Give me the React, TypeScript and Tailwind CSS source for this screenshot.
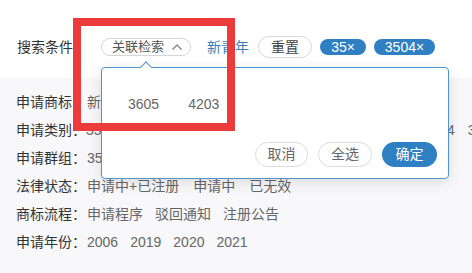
import React from 'react';

const font = { fontFamily: '"Liberation Sans", "Noto Sans CJK SC", sans-serif' };

const rows: { label: string; items: string[]; gap: string }[] = [
  { label: '申请商标：', items: ['新青年'], gap: 'gap-[12px]' },
  {
    label: '申请类别：',
    items: ['35', '3501', '3502', '3503', '3505', '3506', '3507', '3508', '3514', '3520'],
    gap: 'gap-[13px]'
  },
  { label: '申请群组：', items: ['3501', '3502', '3503'], gap: 'gap-[12px]' },
  { label: '法律状态：', items: ['申请中+已注册', '申请中', '已无效'], gap: 'gap-[14px]' },
  { label: '商标流程：', items: ['申请程序', '驳回通知', '注册公告'], gap: 'gap-[12px]' },
  { label: '申请年份：', items: ['2006', '2019', '2020', '2021'], gap: 'gap-[12px]' }
];

export default function App() {
  return (
    <div className="relative w-[472px] h-[273px] overflow-hidden bg-[#f8f8fa]" style={font}>
      {/* search bar */}
      <div className="h-[78px] bg-white pt-[36px] pl-[17px]">
        <div className="flex items-center h-[22px] text-[14px]">
          <span className="w-[84px] text-[#333]">搜索条件</span>
          <div className="relative z-10">
            <div className="flex items-center h-[18px] w-[90px] pl-[10px] border border-[#d6d6d6] rounded-full text-[13px] text-[#555]">
              <span>关联检索</span>
              <svg width="12" height="8" viewBox="0 0 12 8" className="ml-[7px]">
                <polyline points="1.5,6.5 6,2 10.5,6.5" fill="none" stroke="#777" strokeWidth="1.1" />
              </svg>
            </div>
            {/* dropdown panel */}
            <div className="absolute left-0 top-[29px] w-[348px] h-[112px] bg-white border border-[#4f93cf] rounded-[4px] shadow-[0_3px_14px_rgba(0,0,0,0.12)]">
              <div className="absolute -top-[5px] left-[40px] w-[8px] h-[8px] bg-white border-l border-t border-[#4f93cf] rotate-45" />
              <div className="flex gap-[29px] pl-[26px] pt-[26px] text-[14px] text-[#666]">
                <span>3605</span>
                <span>4203</span>
              </div>
              <div className="absolute right-[11px] bottom-[11px] flex gap-[10px] text-[14px]">
                <button className="w-[53px] h-[25px] rounded-full border border-[#dcdcdc] text-[#666] bg-white">取消</button>
                <button className="w-[54px] h-[25px] rounded-full border border-[#dcdcdc] text-[#666] bg-white">全选</button>
                <button className="w-[55px] h-[25px] rounded-full bg-[#2f7fc3] text-white">确定</button>
              </div>
            </div>
          </div>
          <span className="ml-[16px] text-[#3a7fc0]">新青年</span>
          <button className="ml-[9px] w-[54px] h-[22px] rounded-full border border-[#d9d9d9] text-[#444] bg-white">重置</button>
          <span className="ml-[8px] flex items-center justify-center w-[46px] h-[16px] rounded-full bg-[#2f7fc3] text-white">35×</span>
          <span className="ml-[8px] flex items-center justify-center w-[61px] h-[16px] rounded-full bg-[#2f7fc3] text-white">3504×</span>
        </div>
      </div>

      {/* filter rows */}
      <div className="pt-[10px] pl-[16px]">
        {rows.map(r => (
          <div key={r.label} className="flex items-center h-[28px] text-[14px] whitespace-nowrap">
            <span className="w-[71px] text-[#333]">{r.label}</span>
            <div className={`flex ${r.gap} text-[#666]`}>
              {r.items.map(i => (
                <span key={i}>{i}</span>
              ))}
            </div>
          </div>
        ))}
      </div>

      {/* highlight box */}
      <div className="absolute left-[73px] top-[18px] w-[162px] h-[113px] border-[8px] border-[#ec3b3b] z-20" />
    </div>
  );
}
